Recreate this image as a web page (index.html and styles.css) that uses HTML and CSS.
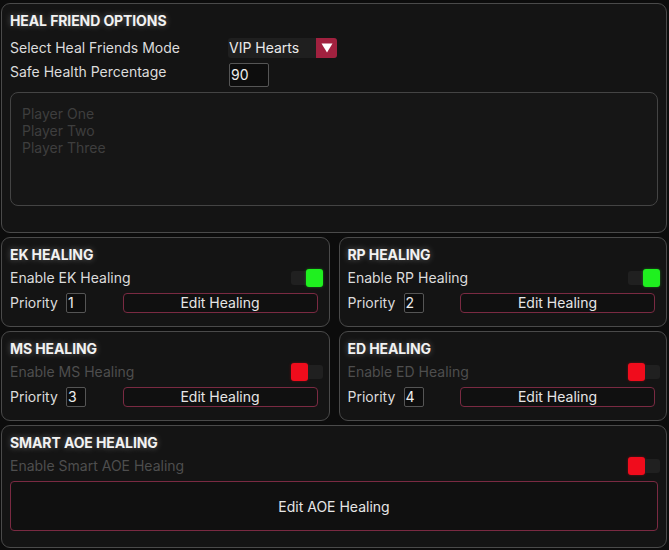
FILE: index.html
```html
<!DOCTYPE html>
<html>
<head>
<meta charset="utf-8">
<link rel="stylesheet" href="styles.css">
</head>
<body>
<section class="panel heal">
  <h2 class="title">HEAL FRIEND OPTIONS</h2>
  <div class="row row-mode">
    <span class="label wide">Select Heal Friends Mode</span>
    <div class="select">
      <span class="select-text">VIP Hearts</span>
      <span class="select-arrow"><svg width="12" height="10" viewBox="0 0 12 10"><path d="M0.5 0.5 L11.5 0.5 L6 9.5 Z" fill="#fff"/></svg></span>
    </div>
  </div>
  <div class="row row-safe">
    <span class="label wide">Safe Health Percentage</span>
    <div class="input big">90</div>
  </div>
  <div class="list">
    <div class="list-item">Player One</div>
    <div class="list-item">Player Two</div>
    <div class="list-item">Player Three</div>
  </div>
</section>

<div class="grid">
  <section class="panel card">
    <h2 class="title">EK HEALING</h2>
    <div class="row toggle-row">
      <span class="label">Enable EK Healing</span>
      <div class="toggle on"><span class="stub"></span><span class="knob"></span></div>
    </div>
    <div class="row prio-row">
      <span class="label prio">Priority</span>
      <div class="input small">1</div>
      <button class="btn">Edit Healing</button>
    </div>
  </section>
  <section class="panel card">
    <h2 class="title">RP HEALING</h2>
    <div class="row toggle-row">
      <span class="label">Enable RP Healing</span>
      <div class="toggle on"><span class="stub"></span><span class="knob"></span></div>
    </div>
    <div class="row prio-row">
      <span class="label prio">Priority</span>
      <div class="input small">2</div>
      <button class="btn">Edit Healing</button>
    </div>
  </section>
  <section class="panel card">
    <h2 class="title">MS HEALING</h2>
    <div class="row toggle-row">
      <span class="label dim">Enable MS Healing</span>
      <div class="toggle off"><span class="knob"></span><span class="stub"></span></div>
    </div>
    <div class="row prio-row">
      <span class="label prio">Priority</span>
      <div class="input small">3</div>
      <button class="btn">Edit Healing</button>
    </div>
  </section>
  <section class="panel card">
    <h2 class="title">ED HEALING</h2>
    <div class="row toggle-row">
      <span class="label dim">Enable ED Healing</span>
      <div class="toggle off"><span class="knob"></span><span class="stub"></span></div>
    </div>
    <div class="row prio-row">
      <span class="label prio">Priority</span>
      <div class="input small">4</div>
      <button class="btn">Edit Healing</button>
    </div>
  </section>
</div>

<section class="panel aoe">
  <h2 class="title">SMART AOE HEALING</h2>
  <div class="row toggle-row">
    <span class="label dim">Enable Smart AOE Healing</span>
    <div class="toggle off"><span class="knob"></span><span class="stub"></span></div>
  </div>
  <button class="btn big-btn">Edit AOE Healing</button>
</section>
</body>
</html>
```

FILE: styles.css
```css
* { box-sizing: border-box; }
html, body { margin: 0; }
body {
  background: #0c0c0c;
  padding: 3px 2px 2px 1px;
  font-family: Inter, "Noto Sans", sans-serif;
  font-size: 14px;
  color: #dedede;
  width: 669px;
  height: 550px;
  overflow: hidden;
}
.panel {
  background: #141414;
  border: 1px solid #4a4a4a;
  border-radius: 9px;
  padding: 9px 6px 0 8px;
}
.title {
  margin: 0;
  font-size: 14px;
  line-height: 16px;
  font-weight: 700;
  color: #f2f2f2;
  text-shadow: 0 0 6px rgba(255,255,255,0.35);
  letter-spacing: -0.1px;
}
.row { display: flex; align-items: center; }
.label { line-height: 18px; color: #dcdcdc; white-space: nowrap; }
.label.dim { color: #4e4e4e; }
.label.wide { width: 218px; flex: none; }

/* heal friend panel */
.heal { height: 230px; padding-right: 8px; }
.row-mode { margin-top: 9px; height: 20px; }
.row-safe { margin-top: 5px; height: 24px; align-items: flex-start; }
.row-safe .input { margin-left: 1px; }
.select {
  display: flex;
  width: 109px;
  height: 20px;
  background: #1f1f1f;
  border-radius: 3px;
}
.select-text { flex: 1; line-height: 20px; padding-left: 1px; color: #eaeaea; }
.select-arrow {
  width: 21px;
  background: #a1213f;
  border-radius: 0 3px 3px 0;
  display: flex;
  align-items: center;
  justify-content: center;
}
.input {
  background: #0d0d0d;
  border: 1px solid #555;
  border-radius: 2px;
  color: #eeeeee;
  padding-left: 1px;
}
.input.big { width: 40px; height: 24px; line-height: 22px; }
.input.small { width: 20px; height: 20px; line-height: 18px; flex: none; }
.list {
  margin-top: 5px;
  height: 114px;
  border: 1px solid #444;
  border-radius: 8px;
  background: #161616;
  padding: 12px 11px;
}
.list-item { line-height: 17px; color: #3e3e3e; }

/* grid of cards */
.grid {
  display: grid;
  grid-template-columns: 1fr 1fr;
  column-gap: 9px;
  row-gap: 4px;
  margin: 4px 0;
}
.card { height: 90px; }
.toggle-row { margin-top: 6px; height: 18px; justify-content: space-between; }
.toggle { display: flex; align-items: center; width: 32px; height: 18px; }
.knob { width: 17px; height: 18px; border-radius: 3px; flex: none; }
.stub { width: 15px; height: 14px; background: #202020; flex: none; }
.toggle.on .knob { background: #1ff01f; box-shadow: 0 0 3px rgba(31,240,31,0.4); }
.toggle.on .stub { border-radius: 3px 0 0 3px; }
.toggle.off .knob { background: #f00c1c; box-shadow: 0 0 3px rgba(240,12,28,0.4); }
.toggle.off .stub { border-radius: 0 3px 3px 0; }
.prio-row { margin-top: 6px; height: 20px; }
.prio { width: 56px; flex: none; }
.btn {
  font-family: Inter, "Noto Sans", sans-serif;
  font-size: 14px;
  color: #e6e6e6;
  background: #101010;
  border: 1px solid #7a2a42;
  border-radius: 4px;
  padding: 0;
}
.prio-row .btn { width: 195px; height: 20px; margin-left: auto; margin-right: 5px; line-height: 18px; }

/* AOE panel */
.aoe { height: 123px; }
.big-btn { display: block; width: 648px; height: 50px; margin-top: 6px; }
```
